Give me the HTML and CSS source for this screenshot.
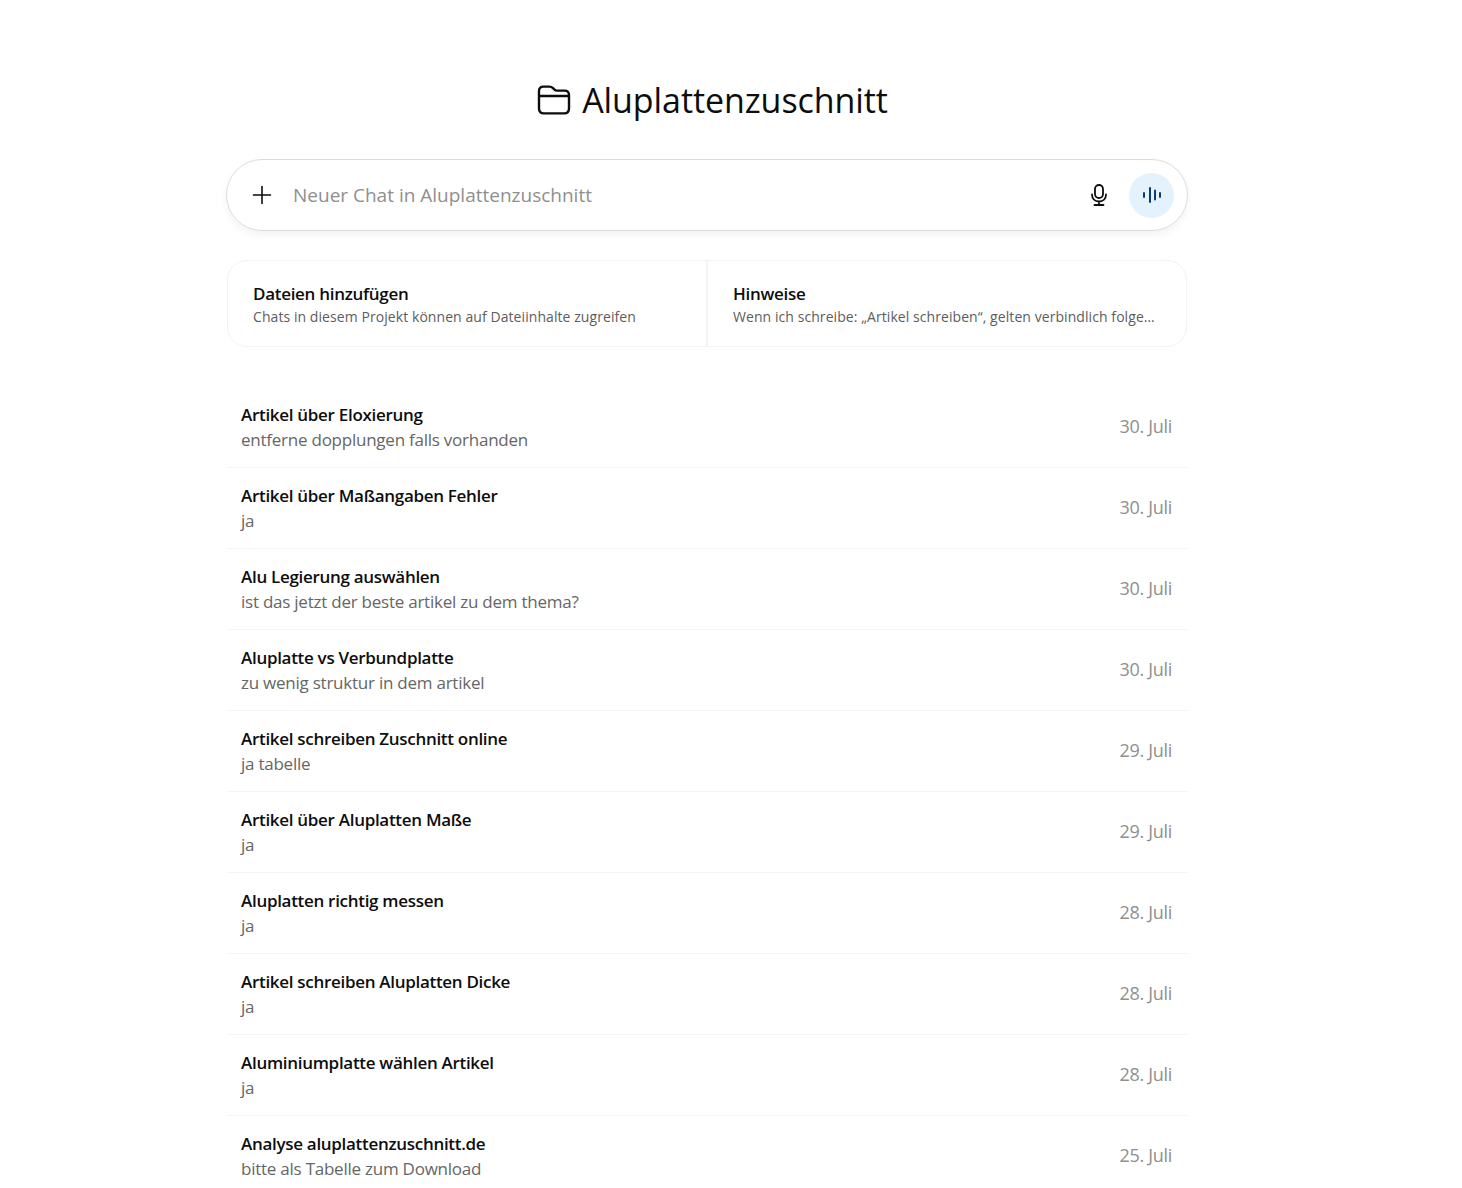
FILE: index.html
```html
<!doctype html>
<html lang="de">
	<head>
		<meta charset="utf-8" />
		<title>Aluplattenzuschnitt</title>
		<link rel="stylesheet" href="styles.css">
	</head>
	<body>
		<main class="project">
			<h1 class="project_title">
				<svg class="folder_icon" width="34" height="30" viewBox="0 0 34 30" fill="none" stroke="#0d0d0d" stroke-width="2.4" stroke-linejoin="round" stroke-linecap="round">
					<path d="M2 11V6C2 3.2 3.7 1.6 6.5 1.6H12.5C14 1.6 15 2.1 16 3.1L17.2 4.3C18 5.1 18.8 5.6 20.2 5.6H27.5C30.3 5.6 32 7.3 32 10V23.5C32 26.6 30.3 28.4 27.2 28.4H6.8C3.7 28.4 2 26.6 2 23.5V11ZM2 11H32"/>
				</svg>
				<span>Aluplattenzuschnitt</span>
			</h1>

			<div class="composer">
				<svg class="plus_icon" width="20" height="20" viewBox="0 0 20 20" stroke="#0d0d0d" stroke-width="1.6" stroke-linecap="round"><path d="M10 1.5V18.5M1.5 10H18.5"/></svg>
				<span class="composer_text">Neuer Chat in Aluplattenzuschnitt</span>
				<svg class="mic_icon" width="20" height="24" viewBox="0 0 20 24" fill="none" stroke="#0d0d0d" stroke-width="1.8" stroke-linecap="round">
					<rect x="6" y="2" width="8" height="13" rx="4"/>
					<path d="M3 11.5C3 16 6 18.5 10 18.5C14 18.5 17 16 17 11.5M10 18.5V22M5.5 22H14.5"/>
				</svg>
				<div class="voice_button">
					<svg width="20" height="18" viewBox="0 0 20 18" fill="none" stroke="#0b3f6b" stroke-width="2" stroke-linecap="round"><path d="M2 7V11M8 2V16M13 4.5V13.5M18 7V11"/></svg>
				</div>
			</div>

			<div class="info_cards">
				<div class="info_card">
					<div class="info_title">Dateien hinzufügen</div>
					<div class="info_text">Chats in diesem Projekt können auf Dateiinhalte zugreifen</div>
				</div>
				<div class="info_card">
					<div class="info_title">Hinweise</div>
					<div class="info_text">Wenn ich schreibe: „Artikel schreiben“, gelten verbindlich folgende Regeln für den gesamten Text</div>
				</div>
			</div>

			<ul class="chat_list">
				<li class="chat_row"><div class="chat_main"><div class="chat_title">Artikel über Eloxierung</div><div class="chat_sub">entferne dopplungen falls vorhanden</div></div><div class="chat_date">30. Juli</div></li>
				<li class="chat_row"><div class="chat_main"><div class="chat_title">Artikel über Maßangaben Fehler</div><div class="chat_sub">ja</div></div><div class="chat_date">30. Juli</div></li>
				<li class="chat_row"><div class="chat_main"><div class="chat_title">Alu Legierung auswählen</div><div class="chat_sub">ist das jetzt der beste artikel zu dem thema?</div></div><div class="chat_date">30. Juli</div></li>
				<li class="chat_row"><div class="chat_main"><div class="chat_title">Aluplatte vs Verbundplatte</div><div class="chat_sub">zu wenig struktur in dem artikel</div></div><div class="chat_date">30. Juli</div></li>
				<li class="chat_row"><div class="chat_main"><div class="chat_title">Artikel schreiben Zuschnitt online</div><div class="chat_sub">ja tabelle</div></div><div class="chat_date">29. Juli</div></li>
				<li class="chat_row"><div class="chat_main"><div class="chat_title">Artikel über Aluplatten Maße</div><div class="chat_sub">ja</div></div><div class="chat_date">29. Juli</div></li>
				<li class="chat_row"><div class="chat_main"><div class="chat_title">Aluplatten richtig messen</div><div class="chat_sub">ja</div></div><div class="chat_date">28. Juli</div></li>
				<li class="chat_row"><div class="chat_main"><div class="chat_title">Artikel schreiben Aluplatten Dicke</div><div class="chat_sub">ja</div></div><div class="chat_date">28. Juli</div></li>
				<li class="chat_row"><div class="chat_main"><div class="chat_title">Aluminiumplatte wählen Artikel</div><div class="chat_sub">ja</div></div><div class="chat_date">28. Juli</div></li>
				<li class="chat_row"><div class="chat_main"><div class="chat_title">Analyse aluplattenzuschnitt.de</div><div class="chat_sub">bitte als Tabelle zum Download</div></div><div class="chat_date">25. Juli</div></li>
			</ul>
		</main>
	</body>
</html>
```

FILE: styles.css
```css
html, body {
	margin : 0;
	height : 1188px;
	overflow : hidden;
	background-color : #ffffff;
}
body {
	font-family : "Open Sans", "Noto Sans", "Liberation Sans", sans-serif;
	color : #0d0d0d;
}
.project {
	width : 960px;
	margin-left : 227px;
	padding-top : 78px;
}
.project_title {
	display : flex;
	align-items : center;
	justify-content : center;
	gap : 11px;
	height : 44px;
	margin : 0 0 37px 0;
	padding-left : 11px;
	font-size : 34px;
	font-weight : 400;
	letter-spacing : -0.08px;
	white-space : nowrap;
}
.composer {
	display : flex;
	align-items : center;
	box-sizing : border-box;
	height : 72px;
	margin : 0 -1px;
	padding : 0 13px 0 25px;
	border : 1px solid #dcdcdc;
	border-radius : 36px;
	box-shadow : 0 4px 8px rgba(0, 0, 0, 0.05);
}
.composer_text {
	flex : 1;
	margin-left : 21px;
	font-size : 19px;
	color : #8f8f8f;
}
.mic_icon {
	margin-right : 20px;
}
.voice_button {
	display : flex;
	align-items : center;
	justify-content : center;
	width : 45px;
	height : 45px;
	border-radius : 50%;
	background-color : #e3f2fc;
}
.info_cards {
	display : flex;
	height : 87px;
	box-sizing : border-box;
	margin-top : 29px;
	border : 1px solid #f3f3f3;
	border-radius : 20px;
}
.info_card {
	flex : 1;
	min-width : 0;
	padding : 22px 27px 0 25px;
}
.info_card + .info_card {
	border-left : 2px solid #f3f3f3;
}
.info_title {
	font-size : 17px;
	font-weight : 600;
	line-height : 22px;
	letter-spacing : -0.3px;
	white-space : nowrap;
}
.info_text {
	font-size : 14px;
	line-height : 24px;
	letter-spacing : 0.07px;
	color : #5d5d5d;
	white-space : nowrap;
	overflow : hidden;
	text-overflow : ellipsis;
}
.chat_list {
	list-style : none;
	margin : 40px 0 0 0;
	padding : 0;
}
.chat_row {
	display : flex;
	align-items : center;
	justify-content : space-between;
	box-sizing : border-box;
	height : 81px;
	padding : 0 15px 0 14px;
	border-bottom : 1px solid #f3f3f3;
}
.chat_title {
	font-size : 17px;
	font-weight : 600;
	line-height : 25px;
	letter-spacing : -0.3px;
}
.chat_sub {
	font-size : 17px;
	line-height : 25px;
	letter-spacing : -0.24px;
	color : #666666;
}
.chat_date {
	padding-bottom : 3px;
	font-size : 18px;
	letter-spacing : -0.3px;
	color : #8f8f8f;
}
```
